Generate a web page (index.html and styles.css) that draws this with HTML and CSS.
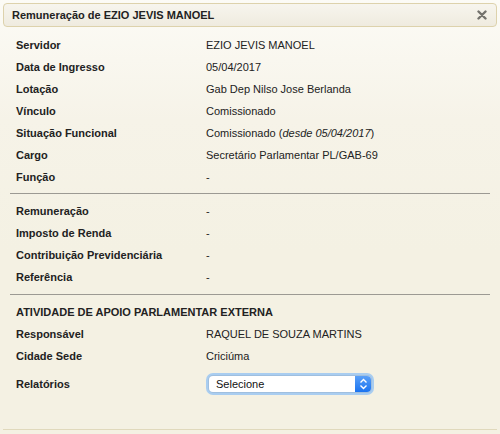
FILE: index.html
```html
<!DOCTYPE html>
<html lang="pt-BR">
<head>
<meta charset="utf-8">
<title>Remuneração</title>
<link rel="stylesheet" href="styles.css">
</head>
<body>
<div class="dialog">
  <div class="titlebar">
    <span class="title">Remuneração de EZIO JEVIS MANOEL</span>
    <span class="close" aria-label="Fechar">
      <svg width="10" height="10" viewBox="0 0 10 10"><path d="M1.5 1.5 L8.5 8.5 M8.5 1.5 L1.5 8.5" stroke="#74736d" stroke-width="2.4" stroke-linecap="round"/></svg>
    </span>
  </div>
  <div class="content">
    <div class="row"><span class="label">Servidor</span><span class="value">EZIO JEVIS MANOEL</span></div>
    <div class="row"><span class="label">Data de Ingresso</span><span class="value">05/04/2017</span></div>
    <div class="row"><span class="label">Lotação</span><span class="value">Gab Dep Nilso Jose Berlanda</span></div>
    <div class="row"><span class="label">Vínculo</span><span class="value">Comissionado</span></div>
    <div class="row"><span class="label">Situação Funcional</span><span class="value">Comissionado (<em>desde 05/04/2017</em>)</span></div>
    <div class="row"><span class="label">Cargo</span><span class="value">Secretário Parlamentar PL/GAB-69</span></div>
    <div class="row"><span class="label">Função</span><span class="value">-</span></div>
    <hr class="sep">
    <div class="row"><span class="label">Remuneração</span><span class="value">-</span></div>
    <div class="row"><span class="label">Imposto de Renda</span><span class="value">-</span></div>
    <div class="row"><span class="label">Contribuição Previdenciária</span><span class="value">-</span></div>
    <div class="row"><span class="label">Referência</span><span class="value">-</span></div>
    <hr class="sep sep2">
    <div class="row heading"><span class="label">ATIVIDADE DE APOIO PARLAMENTAR EXTERNA</span></div>
    <div class="row"><span class="label">Responsável</span><span class="value">RAQUEL DE SOUZA MARTINS</span></div>
    <div class="row"><span class="label">Cidade Sede</span><span class="value">Criciúma</span></div>
    <div class="row select-row"><span class="label">Relatórios</span>
      <span class="value">
        <span class="select">
          <span class="select-text">Selecione</span>
          <span class="select-btn">
            <svg width="9" height="12" viewBox="0 0 9 12"><path d="M1.5 4.5 L4.5 1.5 L7.5 4.5 M1.5 7.5 L4.5 10.5 L7.5 7.5" fill="none" stroke="#fff" stroke-width="1.4"/></svg>
          </span>
        </span>
      </span>
    </div>
  </div>
  <div class="footer"></div>
</div>
</body>
</html>
```

FILE: styles.css
```css
html, body {
  margin: 0;
  padding: 0;
}
body {
  width: 500px;
  height: 434px;
  overflow: hidden;
  font-family: "Liberation Sans", Arial, Helvetica, sans-serif;
  font-size: 11px;
  color: #222;
  background: linear-gradient(to bottom, #fcfbf6 0px, #f6f3e8 120px, #f4f1e3 250px, #f4f1e3 100%);
}
.dialog {
  height: 434px;
  box-sizing: border-box;
  padding: 3px 3px 0 3px;
  display: flex;
  flex-direction: column;
}
.titlebar {
  height: 22px;
  border: 1px solid #ddd2ac;
  border-radius: 4px;
  background: linear-gradient(to bottom, #f7f5ee, #efebdf);
  display: flex;
  align-items: center;
  justify-content: space-between;
  padding: 0 9px 0 8px;
}
.title {
  font-weight: bold;
  font-size: 11px;
  color: #222;
}
.close {
  display: flex;
  align-items: center;
}
.content {
  padding: 7px 7px 0 7px;
  flex: 1;
}
.row {
  display: grid;
  grid-template-columns: 190px 1fr;
  padding-left: 6px;
  height: 22px;
  line-height: 22px;
}
.label {
  font-weight: bold;
  color: #222;
}
.heading .label {
  grid-column: 1 / 3;
}
.value em {
  font-style: italic;
}
.sep {
  border: 0;
  border-top: 1px solid #9c9a93;
  margin: 5px 0 6px 0;
  height: 0;
}
.sep2 {
  margin-top: 6px;
}
.select-row {
  margin-top: 6px;
  height: 22px;
  align-items: center;
}
.select-row .value {
  display: flex;
  align-items: center;
}
.select {
  display: flex;
  width: 162px;
  height: 16px;
  background: #fff;
  border-radius: 4px;
  box-shadow: 0 0 0 1px #9fbfdf, 0 0 0 3px #a9cdf0;
  overflow: hidden;
  margin-left: 3px;
  line-height: 16px;
}
.select-text {
  flex: 1;
  padding-left: 7px;
  font-size: 11px;
  color: #111;
}
.select-btn {
  width: 16px;
  background: linear-gradient(to bottom, #5aa0f8, #1a73f0);
  display: flex;
  align-items: center;
  justify-content: center;
}
.footer {
  height: 4px;
  border-top: 1px solid #e0d9bc;
}
```
